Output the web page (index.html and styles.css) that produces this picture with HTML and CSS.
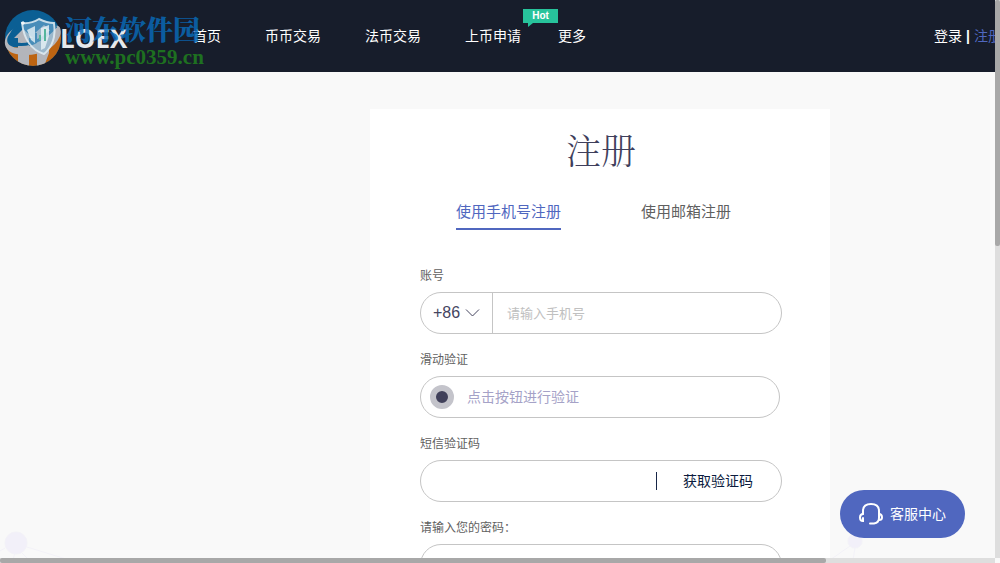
FILE: index.html
```html
<!DOCTYPE html>
<html lang="zh-CN">
<head>
<meta charset="utf-8">
<title>注册 - LOEX</title>
<link rel="stylesheet" href="styles.css">
</head>
<body>
<div class="window">
  <div class="viewport">
    <div class="page">
      <header class="header">
        <a class="logo" href="#">
          <svg class="logo-mark" viewBox="0 0 60 60" aria-hidden="true">
            <defs><clipPath id="globe"><circle cx="29" cy="29" r="28"/></clipPath></defs>
            <g clip-path="url(#globe)">
              <rect width="60" height="60" fill="#0b5f94"/>
              <path d="M0 36Q30 46 60 16V60H0Z" fill="#bd6412"/>
              <path d="M10 29L19 20L29 29H25V60H14V29Z" fill="#b3b5bb"/>
              <path d="M31 24L40 16L49 24H45V44L39 60H33V24Z" fill="#b3b5bb"/>
            </g>
            <path d="M13 18C3 25 0 33 7 37C17 43 42 34 52 17C56 16 58 21 56 27C50 42 30 49 12 45C-4 41-2 25 13 18Z" fill="#b3b5bb"/>
            <path d="M13 18C5 25 5 33 12 35C28 38 44 27 52 17" fill="none" stroke="#0b5f94" stroke-width="3"/>
            <path d="M18 14Q27 15 35 10Q43 14 50 14Q53 34 40 45Q21 39 18 14Z" fill="#86bbdd" fill-opacity=".5" stroke="#e2edf3" stroke-opacity=".85" stroke-width="2"/>
            <path d="M23 21L31 17V34L27 31ZM37 19L45 16V27L41 39L37 41Z" fill="#e9f3f6" fill-opacity=".8"/>
            <path d="M41 20V32M36 26V31" stroke="#55b59c" stroke-width="2"/>
            <path d="M19 12V16M17 14H21" stroke="#fff"/>
          </svg>
          <span class="logo-name">LOEX</span>
        </a>
        <div class="watermark"><span class="watermark-name">河东软件园</span><span class="watermark-url">www.pc0359.cn</span></div>
        <nav class="nav">
          <a href="#">首页</a>
          <a href="#">币币交易</a>
          <a href="#">法币交易</a>
          <a class="nav-hot" href="#">上币申请<span class="hot">Hot</span></a>
          <a class="nav-more" href="#">更多</a>
        </nav>
        <div class="account"><a href="#">登录</a><b>|</b><a class="current" href="#">注册</a></div>
      </header>
      <main class="main">
        <form class="card">
          <h1>注册</h1>
          <div class="tabs">
            <button class="tab active" type="button">使用手机号注册</button>
            <button class="tab" type="button">使用邮箱注册</button>
          </div>
          <label class="label" for="phone">账号</label>
          <div class="field">
            <div class="country">
              <select aria-label="国家区号"><option>+86</option></select>
              <svg class="chevron" viewBox="0 0 14 8" aria-hidden="true"><path d="M.5.5L7 7L13.500.5"/></svg>
            </div>
            <input id="phone" class="phone" type="tel" placeholder="请输入手机号">
          </div>
          <label class="label" for="verify">滑动验证</label>
          <button id="verify" class="field verify" type="button"><span class="dot"></span>点击按钮进行验证</button>
          <label class="label" for="code">短信验证码</label>
          <div class="field">
            <input id="code" type="text">
            <button class="get-code" type="button">获取验证码</button>
          </div>
          <label class="label" for="password">请输入您的密码：</label>
          <div class="field"><input id="password" type="password"></div>
        </form>
      </main>
    </div>
    <svg class="net net-left" viewBox="0 0 90 40" aria-hidden="true"><circle cx="16" cy="20" r="11"/><path d="M5 25L0 28M15 30L12 40M22 30L30 38M27 24L66 36"/></svg>
    <svg class="net net-right" viewBox="0 0 40 40" aria-hidden="true"><circle cx="25" cy="9" r="7"/><path d="M20 14L0 28M25 16L21 40"/></svg>
    <button class="support" type="button">
      <svg class="headset" viewBox="0 0 26 24" aria-hidden="true"><path d="M5 12V9C5 4 8 2 13 2S21 4 21 9V16C21 19 19 21 16 21.500H12"/><path d="M5 12Q2 12 2 15.500Q2 19 5 19V16M21 12Q24 12 24 15.500Q24 18 21 18"/></svg>
      客服中心
    </button>
  </div>
  <div class="bar bar-y"><div class="thumb"></div></div>
  <div class="bar bar-x"><div class="thumb"></div></div>
</div>
</body>
</html>
```

FILE: styles.css
```css
* { box-sizing: border-box; }
body {
  margin: 0;
  overflow: hidden;
  font: 14px/20px "Liberation Sans", "Noto Sans CJK SC", sans-serif;
  color: #5f5f5f;
}
a { color: inherit; text-decoration: none; }
button, input, select {
  margin: 0;
  padding: 0;
  border: 0;
  background: none;
  font: inherit;
  color: inherit;
  outline: 0;
}
.window {
  display: grid;
  grid-template: minmax(0, 1fr) 5px / minmax(0, 1fr) 5px;
  height: 100vh;
  background: #f9f9f9;
}
.viewport { position: relative; overflow: hidden; }
.page { min-width: 1200px; }

.header {
  position: relative;
  display: flex;
  align-items: center;
  height: 72px;
  padding: 0 198px 0 4px;
  background: #171d2b;
  color: #fff;
}
.logo { display: flex; align-items: center; width: 189px; }
.logo-mark { width: 60px; height: 60px; margin-top: 6px; }
.logo-name { font: bold 26px/28px "Open Sans", sans-serif; margin-left: -4px; margin-top: 4px; color: #e6e8ec; }
.watermark { position: absolute; left: 65px; top: 12px; pointer-events: none; }
.watermark span { display: block; font-weight: bold; }
.watermark .watermark-name { font: 900 27px/34px "Noto Serif CJK SC", "Noto Sans CJK SC", serif; color: #0968b4; opacity: .85; }
.watermark .watermark-url { font: bold 21px/22px "Liberation Serif", serif; color: #1e7020; }
.nav { display: flex; gap: 44px; }
.nav-hot { position: relative; }
.nav-more { margin-left: -7px; }
.hot {
  position: absolute;
  left: 58px;
  top: -17px;
  width: 35px;
  height: 14px;
  background: #27c39b;
  font: bold 10px/14px "Liberation Sans", sans-serif;
  text-align: center;
}
.hot::after {
  content: "";
  position: absolute;
  left: 5px;
  top: 14px;
  border-top: 4px solid #27c39b;
  border-right: 5px solid transparent;
}
.account { display: flex; gap: 4px; margin-left: auto; }
.current { color: #5067bf; }

.main { display: flex; justify-content: center; padding-top: 37px; }
.card { width: 460px; padding: 16px 48px 50px 50px; background: #fff; }
h1 {
  margin: 0 0 28px;
  font: 300 35px/48px "Noto Serif CJK SC", "Noto Sans CJK SC", serif;
  color: #3f3f5c;
  text-align: center;
}
.tabs { display: flex; gap: 80px; margin-bottom: 38px; padding-left: 36px; }
.tab {
  padding-bottom: 5px;
  border-bottom: 2px solid transparent;
  font-size: 15px;
  line-height: 22px;
}
.tab.active { border-color: #5067bf; color: #5067bf; }
.label { display: block; padding-top: 2px; margin-bottom: 8px; font-size: 12px; line-height: 16px; }
.field {
  display: flex;
  align-items: center;
  width: 100%;
  height: 42px;
  margin-bottom: 16px;
  border: 1px solid #c5c5c5;
  border-radius: 21px;
  overflow: hidden;
}
.tabs + .label { padding-top: 0; }
.field input { flex: 1; min-width: 0; height: 100%; padding: 0 14px; }
.country {
  display: flex;
  align-items: center;
  gap: 4px;
  width: 72px;
  height: 100%;
  padding-left: 12px;
  border-right: 1px solid #c5c5c5;
  color: #45455f;
}
.country select { appearance: none; font-size: 16px; }
.chevron { width: 15px; height: 8px; fill: none; stroke: #45455f; }
.phone { font-size: 13px; }
.phone::placeholder { color: #c0c0c0; }
.verify { width: 360px; padding-left: 9px; gap: 13px; color: #a5a2c7; }
.dot { width: 24px; height: 24px; border: 6px solid #c4c4cb; border-radius: 50%; background: #40405a; }
.get-code {
  padding: 0 28px 0 26px;
  border-left: 1px solid #172647;
  color: #0b1b3e;
  line-height: 18px;
}

.net { position: absolute; fill: #f2f0f9; stroke: #f3f2f8; }
.net-left { left: 0; bottom: -5px; width: 90px; height: 40px; }
.net-right { left: 830px; bottom: -14px; width: 40px; height: 40px; }
.support {
  position: absolute;
  right: 30px;
  bottom: 20px;
  display: flex;
  align-items: center;
  gap: 6px;
  height: 48px;
  padding: 0 19px 0 18px;
  border-radius: 24px;
  background: #5067bf;
  color: #fff;
}
.headset { width: 26px; height: 24px; fill: none; stroke: #fff; stroke-width: 2; stroke-linecap: round; }

.bar { background: #dedede; }
.bar .thumb { background: #a8a8a8; border-radius: 2px; }
.bar-y .thumb { height: 44%; }
.bar-x .thumb { width: 83%; height: 5px; }
```
